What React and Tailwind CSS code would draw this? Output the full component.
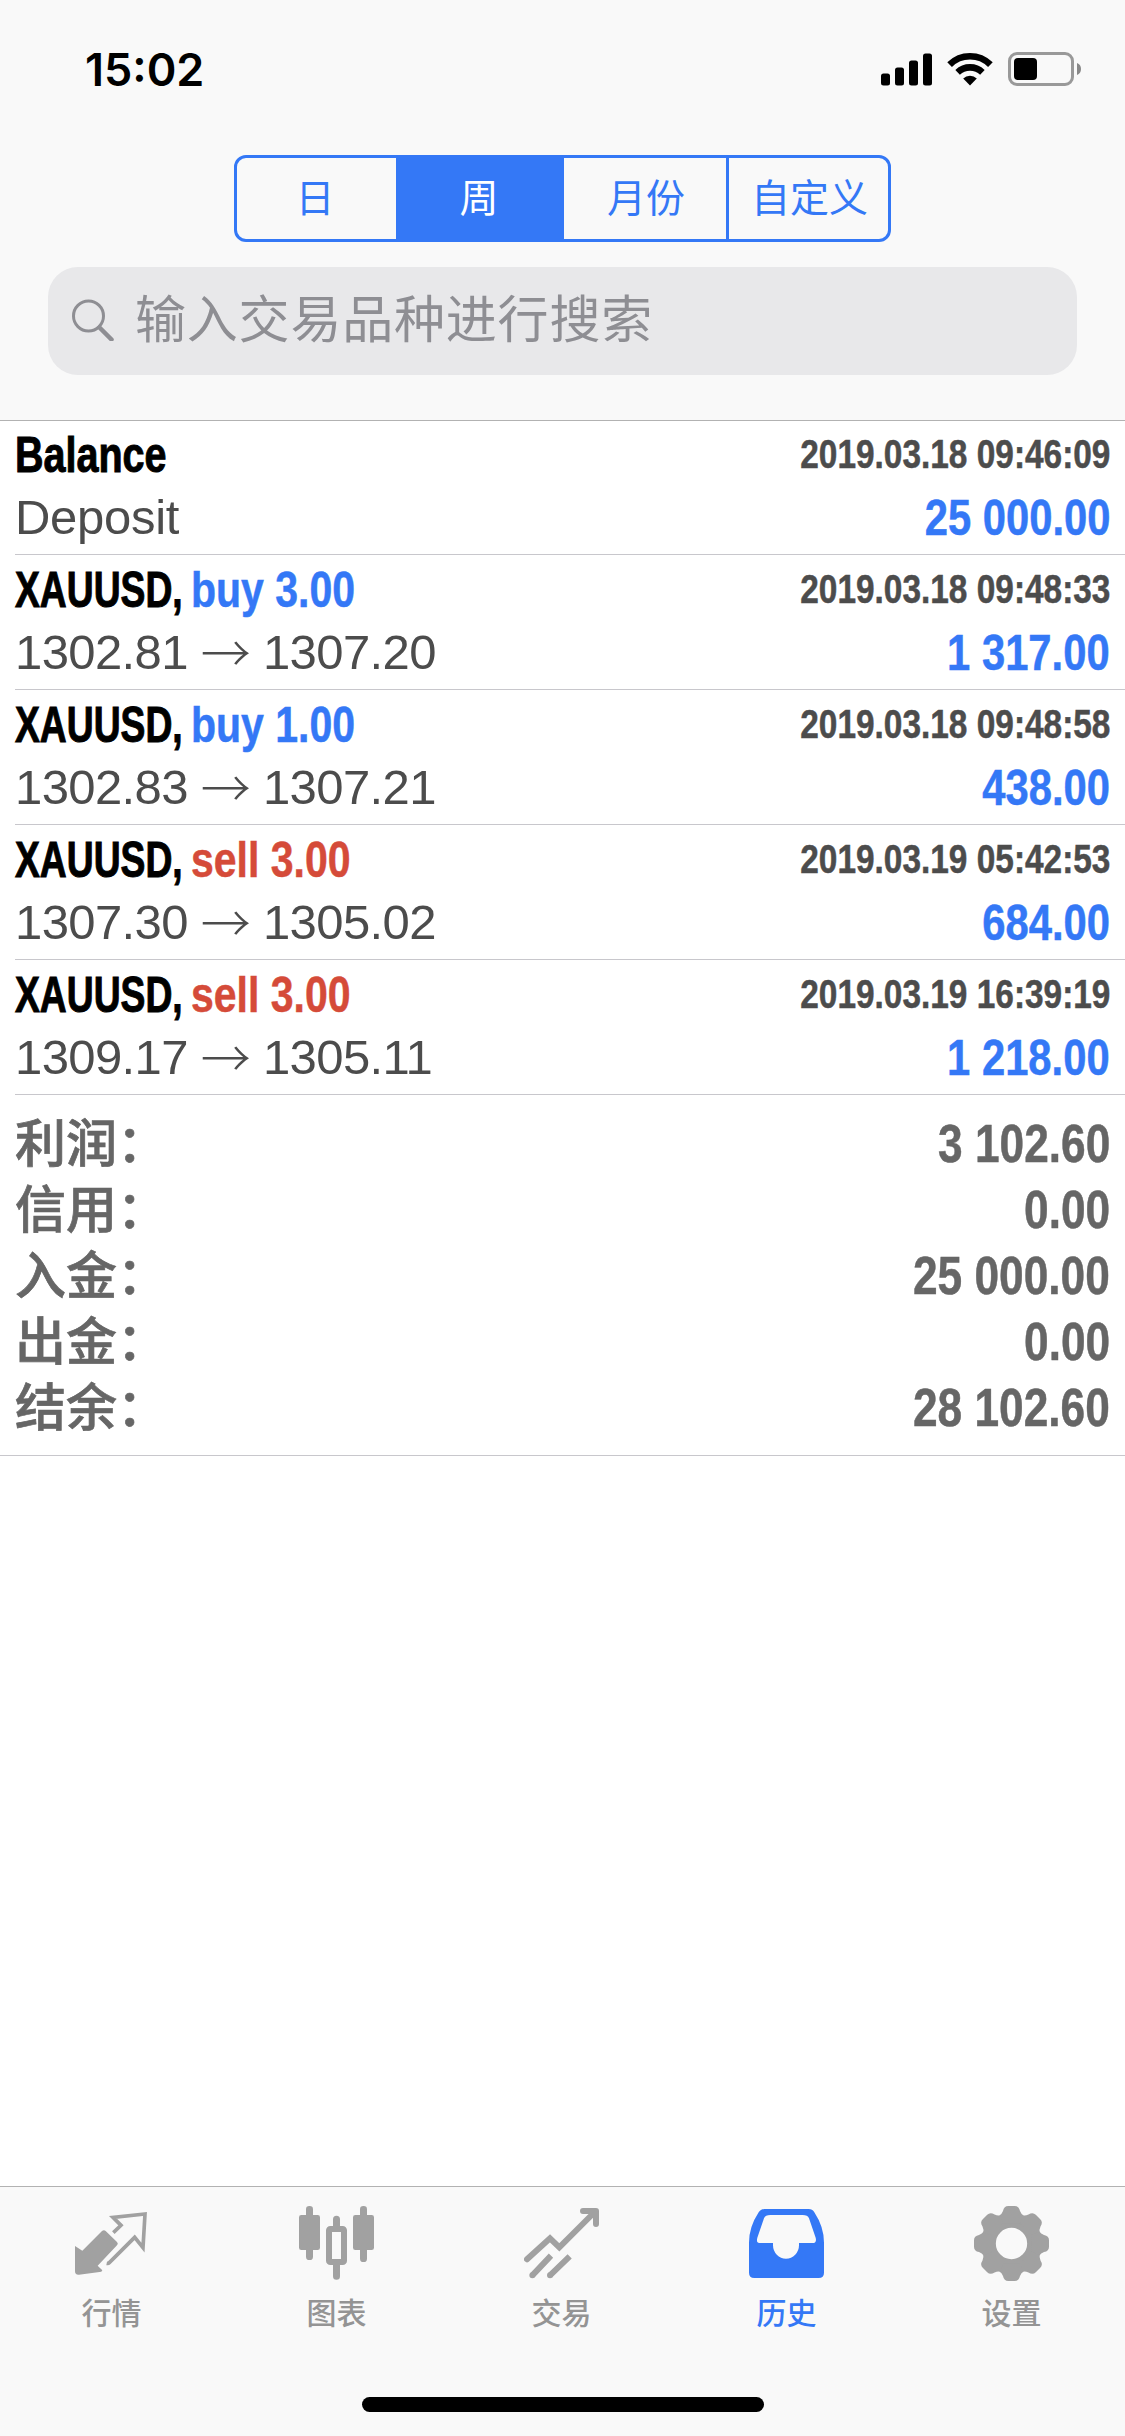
import clsx from "clsx";

const periods = [
  { label: "日", className: "w-[159px] pr-[3px]" },
  { label: "周", className: "w-[168px] pr-[2px]", active: true },
  { label: "月份", className: "w-[165px] border-r-[3px] border-[#3478f6] pl-[2px]" },
  { label: "自定义", className: "w-[159px] pl-[2px]" },
];

const deals = [
  { symbol: "Balance", note: "Deposit", time: "2019.03.18 09:46:09", profit: "25 000.00" },
  { symbol: "XAUUSD", side: "buy", volume: "3.00", open: "1302.81", close: "1307.20", time: "2019.03.18 09:48:33", profit: "1 317.00" },
  { symbol: "XAUUSD", side: "buy", volume: "1.00", open: "1302.83", close: "1307.21", time: "2019.03.18 09:48:58", profit: "438.00" },
  { symbol: "XAUUSD", side: "sell", volume: "3.00", open: "1307.30", close: "1305.02", time: "2019.03.19 05:42:53", profit: "684.00" },
  { symbol: "XAUUSD", side: "sell", volume: "3.00", open: "1309.17", close: "1305.11", time: "2019.03.19 16:39:19", profit: "1 218.00" },
];

const totals = [
  { label: "利润：", value: "3 102.60" },
  { label: "信用：", value: "0.00" },
  { label: "入金：", value: "25 000.00" },
  { label: "出金：", value: "0.00" },
  { label: "结余：", value: "28 102.60" },
];

// ICONS
function SignalIcon() {
  return (
    <svg width="51" height="33" viewBox="0 0 51 33" fill="currentColor">
      <rect x="0" y="20.5" width="9" height="12" rx="2.5" />
      <rect x="14" y="14.5" width="9" height="18" rx="2.5" />
      <rect x="28" y="7.5" width="9" height="25" rx="2.5" />
      <rect x="42" y="0.5" width="9" height="32" rx="2.5" />
    </svg>
  );
}

function WifiIcon() {
  return (
    <svg width="46" height="34" viewBox="0 0 46 34" fill="none" stroke="currentColor" strokeWidth="6.6">
      <path d="M2.600 12.600a29 29 0 0 1 40.800 0" />
      <path d="M10.600 20.300a18 18 0 0 1 24.800 0" />
      <path d="M23 33.400l-6.800-6.900a9.600 9.600 0 0 1 13.600 0z" fill="currentColor" stroke="none" />
    </svg>
  );
}

function BatteryIcon() {
  return (
    <svg width="73" height="34" viewBox="0 0 73 34">
      <rect x="1.5" y="1.5" width="63" height="31" rx="7.5" fill="none" stroke="#999" strokeWidth="3" />
      <rect x="6" y="6" width="23" height="22" rx="4" fill="#000" />
      <path d="M69 11v12c2.600-1 4-3.300 4-6s-1.400-5-4-6z" fill="#888" />
    </svg>
  );
}

function QuotesIcon() {
  return (
    <svg className="-ml-0.5 size-[75px]" viewBox="102 108 225 225">
      <path
        fill="currentColor"
        d="M105 228l22 14 59-59q6-5 11 0l34 33q5 5 0 10l-58 61 14 14-3 4-67 9q-12 1-12-10z"
      />
      <path
        fill="none"
        stroke="currentColor"
        strokeWidth="11"
        d="M220 188l23-22-24-24 96-10-6 101-25-31-76 76q-3 3-8 2"
      />
    </svg>
  );
}

function ChartIcon() {
  return (
    <svg className="-ml-0.5 size-[75px]" viewBox="777 108 225 225" fill="currentColor">
      <rect x="798" y="108" width="21" height="162" rx="10" />
      <rect x="777" y="135" width="63" height="105" rx="7" />
      <rect x="960" y="108" width="21" height="168" rx="10" />
      <rect x="939" y="135" width="63" height="105" rx="7" />
      <path d="M879 168v-20a10.500 10.500 0 0 1 21 0v20zM879 285v34a10.500 10.500 0 0 0 21 0v-34z" />
      <rect x="867" y="177" width="45" height="99" rx="4" fill="none" stroke="currentColor" strokeWidth="18" />
    </svg>
  );
}

function TradeIcon() {
  return (
    <svg className="-ml-0.5 size-[75px]" viewBox="132 108 225 225" fill="none" stroke="currentColor" strokeWidth="18">
      <path d="M141 268l69-63 28 27 106-106" strokeLinecap="round" />
      <path d="M309 123h39v39" strokeLinecap="round" strokeLinejoin="round" />
      <path d="M157 316l56-59M210 316l59-57" />
      <path d="M157 316h.1M210 316h.1" strokeLinecap="round" />
    </svg>
  );
}

function HistoryIcon() {
  return (
    <svg className="-ml-0.5 size-[75px]" viewBox="807 108 225 225" fill="currentColor">
      <path
        fillRule="evenodd"
        d="M853 117h133q11 0 17 10 29 44 29 91v90q0 16-16 16H823q-16 0-16-16v-90q0-47 29-91 6-10 17-10zM871 135q-15 0-19 10l-20 58q-4 16 6 16h41v7a39 40 0 0 0 78 0v-7h41q13 0 9-16l-20-58q-4-10-19-10z"
      />
    </svg>
  );
}

function SettingsIcon() {
  return (
    <svg className="-ml-0.5 size-[75px]" viewBox="222 108 225 225">
      <circle cx="334.500" cy="220.500" r="68.500" fill="none" stroke="currentColor" strokeWidth="43" />
      {[0, 45, 90, 135, 180, 225, 270, 315].map((angle) => (
        <path
          key={angle}
          fill="currentColor"
          transform={`rotate(${angle} 334.500 220.500)`}
          d="M309 160L299 136q6-3 10-13 3-15 16-15h19q13 0 16 15 4 10 10 13l-10 24z"
        />
      ))}
    </svg>
  );
}

const tabs = [
  { label: "行情", Icon: QuotesIcon },
  { label: "图表", Icon: ChartIcon },
  { label: "交易", Icon: TradeIcon },
  { label: "历史", Icon: HistoryIcon, active: true },
  { label: "设置", Icon: SettingsIcon },
];

function StatusBar() {
  return (
    <div className="flex h-[138px] items-center justify-between pl-[85px] pr-11">
      <span className="font-['Inter',sans-serif] text-[45px] font-semibold leading-none">15:02</span>
      <div className="flex items-center">
        <SignalIcon />
        <div className="ml-[15px]">
          <WifiIcon />
        </div>
        <div className="ml-[15px]">
          <BatteryIcon />
        </div>
      </div>
    </div>
  );
}

function Header() {
  return (
    <header className="relative z-10 flex h-[421px] flex-col border-b border-[#b2b2b2] bg-[#f9f9f9]">
      <StatusBar />

      {/* PERIOD SWITCH */}
      <div className="mx-auto mt-[17px] flex h-[87px] w-[657px] overflow-hidden rounded-xl border-[3px] border-[#3478f6]">
        {periods.map(({ label, className, active }) => (
          <button
            key={label}
            className={clsx(
              "flex items-center justify-center pb-1.5 text-[39px] leading-none",
              active ? "bg-[#3478f6] text-white" : "text-[#3478f6]",
              className
            )}
          >
            {label}
          </button>
        ))}
      </div>

      {/* SEARCH */}
      <div className="mx-12 mt-[25px] flex h-[108px] items-center rounded-[30px] bg-[#e8e8ea] pl-6 text-[#8e8e93]">
        <svg className="-mt-0.5" width="42" height="42" viewBox="0 0 42 42" fill="none" stroke="currentColor">
          <circle cx="16.500" cy="17" r="15" strokeWidth="3" />
          <path d="M27.500 28.500l12 12" strokeWidth="4.500" strokeLinecap="round" />
        </svg>
        <span className="ml-[21px] pb-[9px] text-[51px] leading-none tracking-[0.800px]">输入交易品种进行搜索</span>
      </div>
    </header>
  );
}

function DealRow({ deal }) {
  return (
    <li className="ml-[15px] flex h-[135px] justify-between whitespace-nowrap border-b border-[#c8c7cc] pr-[15px] font-['Liberation_Sans',sans-serif]">
      <div>
        <p className="mt-[5px] flex h-[60px] items-center text-[50px] font-bold">
          {deal.side ? (
            <>
              <span className="w-[176px]">
                <span className="inline-block origin-left scale-x-[0.745] [-webkit-text-stroke:1px]">{deal.symbol},</span>
              </span>
              <span
                className={clsx(
                  "origin-left scale-x-[0.82] [-webkit-text-stroke:0.5px]",
                  deal.side === "buy" ? "text-[#3478f6]" : "text-[#d54b39]"
                )}
              >
                {deal.side} {deal.volume}
              </span>
            </>
          ) : (
            <span className="origin-left scale-x-[0.79] [-webkit-text-stroke:1px]">{deal.symbol}</span>
          )}
        </p>
        {deal.note ? (
          <p className="mt-[3px] flex h-[60px] items-center text-[49px] tracking-[-0.300px] text-[#4c4c4c]">{deal.note}</p>
        ) : (
          <p className="mt-[3px] flex h-[60px] items-center text-[49px] tracking-[-0.600px] text-[#4c4c4c]">
            <span>{deal.open}</span>
            <span className="w-[75px] pb-1.5 text-center font-['Noto_Sans_CJK_SC',sans-serif] text-[50px] font-light leading-none">→</span>
            <span>{deal.close}</span>
          </p>
        )}
      </div>
      <div className="font-bold [-webkit-text-stroke:0.5px]">
        <p className="mt-1 flex h-[60px] items-center justify-end text-[40px] text-[#4c4c4c]">
          <span className="origin-right scale-x-[0.835]">{deal.time}</span>
        </p>
        <p className="mt-1 flex h-[60px] items-center justify-end text-[50px] text-[#3478f6]">
          <span className="origin-right scale-x-[0.835]">{deal.profit}</span>
        </p>
      </div>
    </li>
  );
}

function Totals() {
  return (
    <div className="h-[361px] border-b border-[#c8c7cc] pl-[15px] pr-[15px] pt-4 text-[#666]">
      {totals.map((row) => (
        <div key={row.label} className="flex h-[66px] items-center justify-between">
          <span className="pb-2 text-[51px] font-medium leading-none [-webkit-text-stroke:0.7px]">{row.label}</span>
          <span className="origin-right scale-x-[0.835] font-['Liberation_Sans',sans-serif] text-[53px] font-bold [-webkit-text-stroke:0.5px]">
            {row.value}
          </span>
        </div>
      ))}
    </div>
  );
}

function TabBar() {
  return (
    <nav className="mt-auto flex h-[250px] flex-col border-t border-[#b2b2b2] bg-[#f9f9f9]">
      <div className="flex">
        {tabs.map(({ label, Icon, active }) => (
          <button
            key={label}
            className={clsx("flex flex-1 flex-col items-center pt-[19px]", active ? "text-[#3478f6]" : "text-[#a1a1a1]")}
          >
            <Icon />
            <span className={clsx("-ml-0.5 mt-[15px] text-[30px] font-medium leading-[30px]", !active && "text-[#949494]")}>{label}</span>
          </button>
        ))}
      </div>
      <div className="mx-auto mb-6 mt-auto h-[15px] w-[402px] rounded-full bg-black" />
    </nav>
  );
}

function App() {
  return (
    <div className="flex h-[2436px] w-[1125px] flex-col overflow-hidden bg-white font-['Noto_Sans_CJK_SC',sans-serif] text-black">
      <Header />
      <ul className="-mt-px">
        {deals.map((deal) => (
          <DealRow key={deal.time} deal={deal} />
        ))}
      </ul>
      <Totals />
      <TabBar />
    </div>
  );
}

export default App;
